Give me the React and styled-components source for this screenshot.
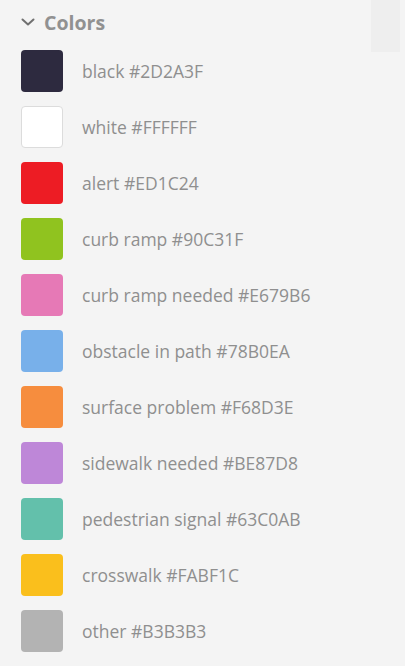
import styled, { createGlobalStyle } from "styled-components";

const GlobalStyle = createGlobalStyle`
  html, body {
    margin: 0;
    padding: 0;
    background: #f4f4f4;
    font-family: "Open Sans", "Noto Sans", sans-serif;
  }
`;

const Panel = styled.section`
  position: relative;
  width: 405px;
  height: 666px;
  overflow: hidden;
  background: #f4f4f4;
  box-sizing: border-box;
  padding: 10px 0 0 21px;
`;

const Corner = styled.div`
  position: absolute;
  top: 0;
  right: 5px;
  width: 29px;
  height: 52px;
  background: #eeeeee;
`;

const Header = styled.div`
  display: flex;
  align-items: center;
  gap: 9px;
  height: 24px;
  color: #919191;
  font-size: 19.5px;
  font-weight: 700;
`;

const List = styled.ul`
  list-style: none;
  margin: 16px 0 0;
  padding: 0;
  display: flex;
  flex-direction: column;
  gap: 14px;
`;

const Row = styled.li`
  display: flex;
  align-items: center;
  gap: 19px;
  height: 42px;
`;

const Swatch = styled.span`
  width: 42px;
  height: 42px;
  box-sizing: border-box;
  border-radius: 4px;
  background: ${(p) => p.$color};
  border: ${(p) => (p.$outlined ? "1px solid #dcdcdc" : "none")};
`;

const Label = styled.span`
  color: #8f8f8f;
  font-size: 17.5px;
`;

const colors = [
  ["black", "#2D2A3F"],
  ["white", "#FFFFFF"],
  ["alert", "#ED1C24"],
  ["curb ramp", "#90C31F"],
  ["curb ramp needed", "#E679B6"],
  ["obstacle in path", "#78B0EA"],
  ["surface problem", "#F68D3E"],
  ["sidewalk needed", "#BE87D8"],
  ["pedestrian signal", "#63C0AB"],
  ["crosswalk", "#FABF1C"],
  ["other", "#B3B3B3"],
];

export default function App() {
  return (
    <>
      <GlobalStyle />
      <Panel>
        <Corner />
        <Header>
          <svg width="14" height="14" viewBox="0 0 14 14" fill="none">
            <path d="M1.5 4.5 L7 9.5 L12.5 4.5" stroke="#707070" strokeWidth="2" strokeLinecap="round" strokeLinejoin="round" />
          </svg>
          Colors
        </Header>
        <List>
          {colors.map(([name, hex]) => (
            <Row key={name}>
              <Swatch $color={hex} $outlined={hex === "#FFFFFF"} />
              <Label>
                {name} {hex}
              </Label>
            </Row>
          ))}
        </List>
      </Panel>
    </>
  );
}
